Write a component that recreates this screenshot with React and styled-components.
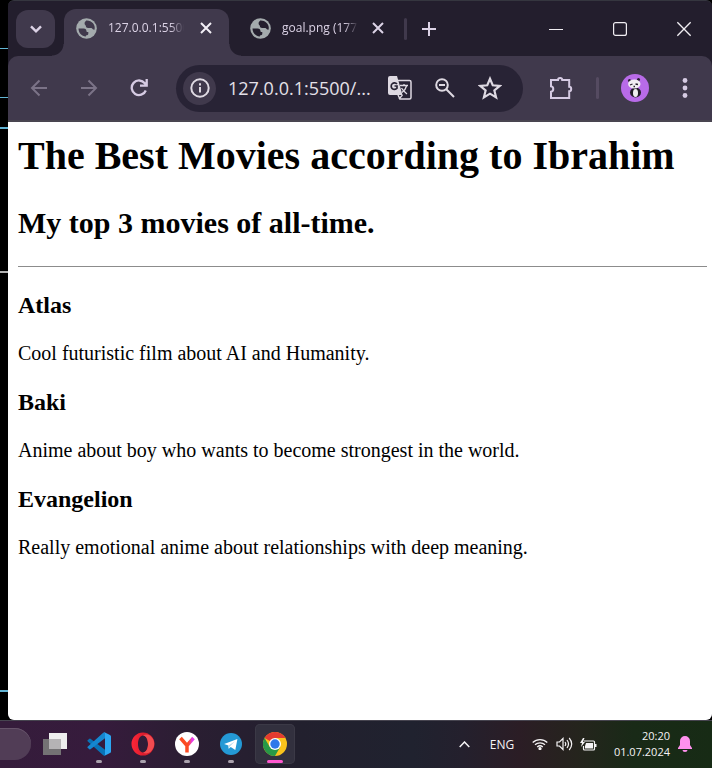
import React from 'react';
import styled, { createGlobalStyle, css } from 'styled-components';

const Global = createGlobalStyle`
  * { box-sizing: border-box; }
  body { margin: 0; background: #000; font-family: "Open Sans", "Noto Sans", sans-serif; }
  button { font: inherit; color: inherit; border: 0; padding: 0; background: none; }
`;

const Desktop = styled.div`
  display: flex;
  flex-direction: column;
  min-height: 100vh;
`;

const Workspace = styled.div`
  display: flex;
  flex: 1;
`;

const blueLine = 'linear-gradient(#62b4d4, #62b4d4)';
const Backdrop = styled.div`
  width: 8px;
  background-color: #000;
  background-image: ${blueLine}, ${blueLine}, ${blueLine}, linear-gradient(#b4b4b4, #b4b4b4), ${blueLine};
  background-repeat: no-repeat;
  background-size: 8px 1px, 8px 1px, 8px 2px, 8px 2px, 8px 2px;
  background-position: 0 48px, 0 97px, 0 127px, 0 271px, 0 690px;
`;

const Browser = styled.main`
  display: flex;
  flex: 1;
  flex-direction: column;
  min-width: 0;
  overflow: hidden;
  border-radius: 6px;
  background: #231e2d;
  border-top: 1px solid #35363f;
`;

const TabStrip = styled.header`
  display: flex;
  align-items: center;
  height: 55px;
  padding-left: 8px;
  color: #dcd3e6;
`;

const TabSearch = styled.button`
  display: grid;
  place-items: center;
  width: 39px;
  height: 38px;
  margin-right: 9px;
  border-radius: 12px;
  background: #40394c;
`;

const Tab = styled.div`
  position: relative;
  display: flex;
  align-items: center;
  align-self: flex-end;
  width: 175px;
  height: 47px;
  padding: 0 16px 9px 21px;
  border-radius: 12px 12px 0 0;
  ${p => p.$active && css`
    width: 165px;
    padding: 0 13px 9px 12px;
    background: #40394c;
    &::before, &::after {
      content: "";
      position: absolute;
      bottom: 0;
      width: 12px;
      height: 12px;
    }
    &::before {
      left: -12px;
      background: radial-gradient(circle at 0 0, transparent 11px, #40394c 12px);
    }
    &::after {
      right: -12px;
      background: radial-gradient(circle at 100% 0, transparent 11px, #40394c 12px);
    }
  `}
`;

const TabTitle = styled.span`
  flex: none;
  margin: 0 auto 0 11px;
  white-space: nowrap;
  font-size: 12px;
  line-height: 20px;
  mask-image: linear-gradient(90deg, #000 62px, transparent 76px);
`;

const IconButton = styled.button`
  display: grid;
  flex: none;
  place-items: center;
  width: ${p => p.$w || 24}px;
  height: 32px;
  color: ${p => p.$color || 'inherit'};
`;

const Divider = styled.span`
  flex: none;
  width: 3px;
  height: 22px;
  border-radius: 2px;
  background: ${p => p.$color};
`;

const WindowControls = styled.div`
  display: flex;
  margin: 0 -4px 0 auto;
  color: #f0edf2;
`;

const Toolbar = styled.nav`
  display: flex;
  align-items: center;
  height: 66px;
  padding: 0 3px 0 6px;
  border-radius: 10px 10px 0 0;
  background: #40394c;
  border-bottom: 2px solid #494550;
  color: #d6cbe3;
`;

const AddressBar = styled.form`
  display: flex;
  flex: 1;
  align-items: center;
  min-width: 0;
  height: 47px;
  margin: 0 14px 0 12px;
  padding: 0 11px 0 7px;
  border-radius: 24px;
  background: #282335;
  color: #ded9e2;
`;

const SiteInfo = styled.button`
  display: grid;
  flex: none;
  place-items: center;
  width: 33px;
  height: 33px;
  margin-right: 12px;
  border-radius: 50%;
  background: #40394c;
`;

const AddressInput = styled.input`
  flex: 1;
  width: 0;
  min-width: 0;
  padding: 0;
  border: 0;
  background: none;
  color: #e4e0e8;
  font: 18px/28px "Open Sans", "Noto Sans", sans-serif;
`;

const Page = styled.article`
  flex: 1;
  padding: 11px 5px 10px 10px;
  background: #fff;
  color: #000;
  font: 20px/23px "Liberation Serif", "Times New Roman", serif;
`;

const Title = styled.h1`
  margin: 0;
  font-size: 40px;
  line-height: 46px;
`;

const Subtitle = styled.h2`
  margin: 27px 0 26px;
  font-size: 30px;
  line-height: 34px;
`;

const Rule = styled.hr`
  height: 1px;
  margin: 0 0 25px;
  border: 0;
  background: #8c8c8c;
`;

const MovieTitle = styled.h3`
  margin: 24px 0 23px;
  font-size: 24px;
  line-height: 27px;
`;

const Summary = styled.p`
  margin: 0;
`;

const Taskbar = styled.footer`
  display: flex;
  align-items: center;
  height: 48px;
  box-shadow: inset 0 1px #46444f;
  background: linear-gradient(90deg, #351c3b 0%, #361b3c 14%, #2a1e32 27%, #22202e 42%, #20222f 58%, #24202d 65%, #2b1d25 73%, #25241d 81%, #192a17 89%, #172b15 100%);
  color: #f5f3f5;
`;

const SearchPill = styled.button`
  width: 31px;
  height: 32px;
  margin-right: 2px;
  border-radius: 0 16px 16px 0;
  background: #513d56;
  box-shadow: inset 0 1px #66536a;
`;

const AppButton = styled.button`
  position: relative;
  display: grid;
  place-items: center;
  width: 40px;
  height: 40px;
  margin: 0 2px;
  border-radius: 5px;
  background: ${p => (p.$current ? '#32303e' : 'none')};
  box-shadow: ${p => (p.$current ? 'inset 0 0 0 1px #3b3946' : 'none')};
  &::after {
    content: "";
    position: absolute;
    bottom: 1px;
    width: ${p => (p.$current ? 16 : p.$running ? 6 : 0)}px;
    height: 3px;
    border-radius: 2px;
    background: ${p => (p.$current ? '#ff58d0' : '#aaa2ad')};
  }
`;

const Tray = styled.div`
  display: flex;
  align-items: center;
  margin-left: auto;
  padding-right: 20px;
`;

const Language = styled.button`
  width: 48px;
  height: 32px;
  margin-right: 2px;
  font-size: 12px;
`;

const Clock = styled.time`
  width: 70px;
  margin-right: 8px;
  font-size: 11px;
  line-height: 16px;
  text-align: right;
`;

const Icon = ({ size = 20, w, h, box = '0 0 24 24', stroke, children }) => (
  <svg width={w || size} height={h || size} viewBox={box} aria-hidden="true"
    fill={stroke ? 'none' : 'currentColor'} stroke={stroke ? 'currentColor' : 'none'} strokeWidth={stroke}>
    {children}
  </svg>
);

const Globe = ({ ground = '#40394c' }) => (
  <Icon size={21} box="0 0 21 21">
    <circle cx="10.5" cy="10.5" r="10.3" fill="#a4abad" />
    <path d="M2.500 10.500h5.200c2 0 2.700 1 2.700 2.300s.8 1.300 1.900 1.300v1.600c0 1-1 1.700-2.400 1.700v1.200C5.700 18.400 2.500 14.900 2.500 10.500zM10.200 2.500C8.900 4 8.600 4.200 8.600 5.500c0 1.500 1.300 1.600 1.300 2.700 0 1.200 1 1.700 2.100 1.700h3.200c1.400 0 1.100 1.900 3.300 1.900 1.500-5.200-3.100-9.700-8.300-9.300z" fill={ground} />
  </Icon>
);

const Close = ({ size = 12, stroke = 2 }) => (
  <Icon size={size} box="0 0 12 12" stroke={stroke}><path d="M1 1l10 10M11 1L1 11" /></Icon>
);

const Arrow = ({ d }) => (
  <Icon size={18} box="0 0 18 18" stroke={2}><path d={d} /></Icon>
);

const Panda = () => (
  <Icon size={28} box="0 0 28 28">
    <circle cx="14" cy="14" r="14" fill="#b86be8" />
    <ellipse cx="14.500" cy="18.500" rx="5.500" ry="5" fill="#211d27" />
    <ellipse cx="14.500" cy="19" rx="2.500" ry="4" fill="#eee" />
    <circle cx="8.500" cy="6.500" r="1.500" fill="#28212d" />
    <circle cx="17.500" cy="5.500" r="1.500" fill="#28212d" />
    <ellipse cx="13.300" cy="10" rx="6.200" ry="4.500" fill="#f1eef2" />
    <path d="M9 11l2.500-1M14.500 10l2.500.5M12.500 12.500h1.500" stroke="#28212d" strokeWidth="1.300" />
  </Icon>
);

const VSCode = () => (
  <Icon size={24}>
    <path d="M.6 8.300L2.400 6.800q.7-.4 1.400.1L18 17.700v5.800q-1 .5-1.800-.3L.6 9.300q-.5-.5 0-1z" fill="#0873b8" />
    <path d="M.6 15.700l1.800 1.500q.7.4 1.400-.1L18 6.300V.5q-1-.5-1.800.3L.6 14.700q-.5.5 0 1z" fill="#1587cf" />
    <path d="M17 .1L23 2.900q1 .5 1 1.500v15.200q0 1-1 1.500l-6 2.800q1-.5 1-1.500V1.600q0-1-1-1.500z" fill="#2ca7f2" />
  </Icon>
);

const Opera = () => (
  <Icon size={24}>
    <defs>
      <linearGradient id="operaRed" x1="0" x2="1"><stop stopColor="#ff2638" /><stop offset="1" stopColor="#be1524" /></linearGradient>
    </defs>
    <path fillRule="evenodd" fill="url(#operaRed)" d="M12 .5a11.500 11.500 0 100 23 11.500 11.500 0 000-23zM12 3.500c3 0 5 3.700 5 8.500s-2 8.500-5 8.500S7 16.800 7 12s2-8.500 5-8.500z" />
    <path d="M12 3.500c3 0 5 3.700 5 8.500s-2 8.500-5 8.500c2 1.300 5 1.200 7.500-.5 5-4.500 5-12 0-16-2.500-1.800-5.500-1.800-7.500-.5z" fill="#f24b50" />
  </Icon>
);

const Yandex = () => (
  <Icon size={24}>
    <defs>
      <linearGradient id="yandexArm" x1="0" x2="1"><stop offset=".6" stopColor="#fb4b22" /><stop offset=".9" stopColor="#e63cec" /></linearGradient>
    </defs>
    <circle cx="12" cy="12" r="12" fill="#fff" />
    <path d="M5.500 6l6.500 7.500L18.500 6M12 13v7.500" stroke="url(#yandexArm)" strokeWidth="3.500" fill="none" />
  </Icon>
);

const Telegram = () => (
  <Icon size={22}>
    <circle cx="12" cy="12" r="12" fill="#2499d5" />
    <path d="M4.500 12L19 6.500l-2.300 12-5-3.300-2.200 2-.3-3.600z" fill="#fff" />
    <path d="M9.200 13.600L16.500 9l-5.800 5.700-1.200 2.500z" fill="#b9dcef" />
  </Icon>
);

const Chrome = () => (
  <Icon size={24}>
    <circle cx="12" cy="12" r="12" fill="#fac31c" />
    <path d="M12 12L1.600 6A12 12 0 0122.400 6H12z" fill="#e53b30" />
    <path d="M1.600 6A12 12 0 0012 24l5.200-9L12 12 6.800 15z" fill="#279847" />
    <circle cx="12" cy="12" r="6" fill="#fff" />
    <circle cx="12" cy="12" r="4.700" fill="#3079ea" />
  </Icon>
);

const TaskView = () => (
  <Icon w={24} h={22} box="0 0 24 22">
    <path d="M0 6h18v16H0z" fill="#747274" />
    <path d="M6 0h18v16H6z" fill="#eee" />
    <path d="M6 6h12v10H6z" fill="#b5b3b5" />
  </Icon>
);

const movies = [
  ['Atlas', 'Cool futuristic film about AI and Humanity.'],
  ['Baki', 'Anime about boy who wants to become strongest in the world.'],
  ['Evangelion', 'Really emotional anime about relationships with deep meaning.'],
];

export default function App() {
  return (
    <Desktop>
      <Global />
      <Workspace>
        <Backdrop />
        <Browser>
          <TabStrip>
            <TabSearch aria-label="Search tabs">
              <Icon w={12} h={8} box="0 0 12 8" stroke={2.4}><path d="M1 1.300l5 5 5-5" /></Icon>
            </TabSearch>
            <Tab $active>
              <Globe />
              <TabTitle>127.0.0.1:5500</TabTitle>
              <IconButton $w={20} $color="#f3eff6" aria-label="Close tab"><Close /></IconButton>
            </Tab>
            <Tab>
              <Globe ground="#231e2d" />
              <TabTitle>goal.png (177</TabTitle>
              <IconButton $w={20} aria-label="Close tab"><Close /></IconButton>
            </Tab>
            <Divider $color="#40394c" />
            <IconButton $w={44} aria-label="New tab">
              <Icon size={14} box="0 0 14 14" stroke={2}><path d="M7 0v14M0 7h14" /></Icon>
            </IconButton>
            <WindowControls>
              <IconButton $w={64} aria-label="Minimize"><Icon size={14} box="0 0 14 14" stroke={1}><path d="M0 7.500h14" /></Icon></IconButton>
              <IconButton $w={64} aria-label="Maximize"><Icon size={14} box="0 0 14 14" stroke={1.2}><rect x=".6" y=".6" width="12.8" height="12.8" rx="2" /></Icon></IconButton>
              <IconButton $w={64} aria-label="Close window"><Close size={16} stroke={1} /></IconButton>
            </WindowControls>
          </TabStrip>
          <Toolbar aria-label="Browser toolbar">
            <IconButton $w={50} $color="#7b7387" aria-label="Back"><Arrow d="M17 9H2M9.500 1.500L2 9l7.500 7.500" /></IconButton>
            <IconButton $w={50} $color="#7b7387" aria-label="Forward"><Arrow d="M1 9h15M8.500 1.500L16 9l-7.500 7.500" /></IconButton>
            <IconButton $w={50} aria-label="Reload">
              <Icon size={18} box="0 0 18 18" stroke={2.3}><path d="M15.800 11.500a7.300 7.300 0 11-1-7.200l1.500 1.700M16.700 0v6.700H10" /></Icon>
            </IconButton>
            <AddressBar onSubmit={e => e.preventDefault()}>
              <SiteInfo type="button" aria-label="Site information">
                <Icon size={20} box="0 0 20 20" stroke={2}><circle cx="10" cy="10" r="8.7" /><path d="M10 9v5.500M10 5.200v2.200" /></Icon>
              </SiteInfo>
              <AddressInput aria-label="Address" defaultValue="127.0.0.1:5500/..." />
              <IconButton type="button" $w={45} aria-label="Translate">
                <Icon size={24}>
                  <path d="M9 4.500h12.500q1.500 0 1.500 1.500v15.500q0 1.500-1.500 1.500H12l-2-4" fill="none" stroke="currentColor" strokeWidth="1.5" />
                  <path d="M2 0h7l1 3.500 4.500 15.500H2q-2 0-2-2V2q0-2 2-2z" />
                  <path d="M9 8a3.300 3.300 0 100 4.300V10H6.500" fill="none" stroke="#282335" strokeWidth="1.7" />
                  <path d="M12 9.500h8M16 8v2M18.500 10c-.7 3-2.500 5-4.500 6.500M13.500 12c1 2 3 4 5.500 6M11 23l3.500-4" fill="none" stroke="currentColor" strokeWidth="1.3" />
                </Icon>
              </IconButton>
              <IconButton type="button" $w={45} aria-label="Zoom">
                <Icon size={20} box="0 0 20 20" stroke={2}><circle cx="7" cy="7" r="5.8" /><path d="M11.300 11.300L19 19M4 7h6" /></Icon>
              </IconButton>
              <IconButton type="button" $w={45} aria-label="Bookmark">
                <Icon size={24} box="0 0 22 22" stroke={2}><path d="M11 2.500l2.500 6 6.500.5-5 4.300 1.600 6.400L11 16.200l-5.600 3.500L7 13.300 2 9l6.500-.5z" /></Icon>
              </IconButton>
            </AddressBar>
            <IconButton $w={48} aria-label="Extensions">
              <Icon size={24} stroke={2}><path d="M2.500 4H9a2 1.800 0 014.200 0h7v6.800a2 2.200 0 010 4.400V22H2v-6.200a2.800 2.800 0 000-5.500V4z" /></Icon>
            </IconButton>
            <IconButton as="span" $w={24}><Divider $color="#554b61" /></IconButton>
            <IconButton $w={52} aria-label="Profile"><Panda /></IconButton>
            <IconButton $w={48} aria-label="Menu">
              <Icon w={6} h={20} box="0 0 6 20"><circle cx="3" cy="2.5" r="2.4" /><circle cx="3" cy="10" r="2.4" /><circle cx="3" cy="17.5" r="2.4" /></Icon>
            </IconButton>
          </Toolbar>
          <Page>
            <Title>The Best Movies according to Ibrahim</Title>
            <Subtitle>My top 3 movies of all-time.</Subtitle>
            <Rule />
            {movies.map(([name, text]) => (
              <section key={name}>
                <MovieTitle>{name}</MovieTitle>
                <Summary>{text}</Summary>
              </section>
            ))}
          </Page>
        </Browser>
      </Workspace>
      <Taskbar>
        <SearchPill aria-label="Search" />
        <AppButton aria-label="Task view"><TaskView /></AppButton>
        <AppButton $running aria-label="Visual Studio Code"><VSCode /></AppButton>
        <AppButton $running aria-label="Opera"><Opera /></AppButton>
        <AppButton $running aria-label="Yandex Browser"><Yandex /></AppButton>
        <AppButton $running aria-label="Telegram"><Telegram /></AppButton>
        <AppButton $current aria-label="Google Chrome"><Chrome /></AppButton>
        <Tray>
          <IconButton $w={28} aria-label="Show hidden icons"><Icon w={11} h={7} box="0 0 11 7" stroke={1.5}><path d="M.7 6L5.500 1l4.800 5" /></Icon></IconButton>
          <Language>ENG</Language>
          <IconButton aria-label="Network">
            <Icon w={16} h={12} box="0 0 16 12" stroke={1.3}><path d="M.7 4.500a10.500 10.500 0 0114.600 0M3 6.800a7.300 7.300 0 0110 0M5.200 9a4.200 4.200 0 015.600 0" /><circle cx="8" cy="10.6" r="1" fill="currentColor" /></Icon>
          </IconButton>
          <IconButton aria-label="Volume">
            <Icon w={17} h={14} box="0 0 17 14" stroke={1.2}><path d="M1 5v4h2.500L7 12.500v-11L3.500 5zM9 5q1.500 2 0 4M11 3q3 4 0 8M13.200 1q5 6 0 12" /></Icon>
          </IconButton>
          <IconButton aria-label="Battery">
            <Icon w={17} h={13} box="0 0 17 13"><path d="M4 3h9.500q1 0 1 1v7q0 1-1 1h-9q-1 0-1-1V8" fill="none" stroke="currentColor" strokeWidth="1.2" /><path d="M6 5h7v5.500H5V8zM15 6h1.500v3H15zM3 0L0 5h2L1 9l4-5H3l1.500-4z" /></Icon>
          </IconButton>
          <Clock dateTime="2024-07-01T20:20">20:20<br />01.07.2024</Clock>
          <IconButton $w={14} $color="#ff91ee" aria-label="Notifications">
            <Icon w={14} h={16} box="0 0 14 16"><path d="M7 0a5 5 0 00-5 5v4L0 12v1h14v-1l-2-3V5a5 5 0 00-5-5zM4.500 14h5a2.500 2 0 01-5 0z" /></Icon>
          </IconButton>
        </Tray>
      </Taskbar>
    </Desktop>
  );
}
